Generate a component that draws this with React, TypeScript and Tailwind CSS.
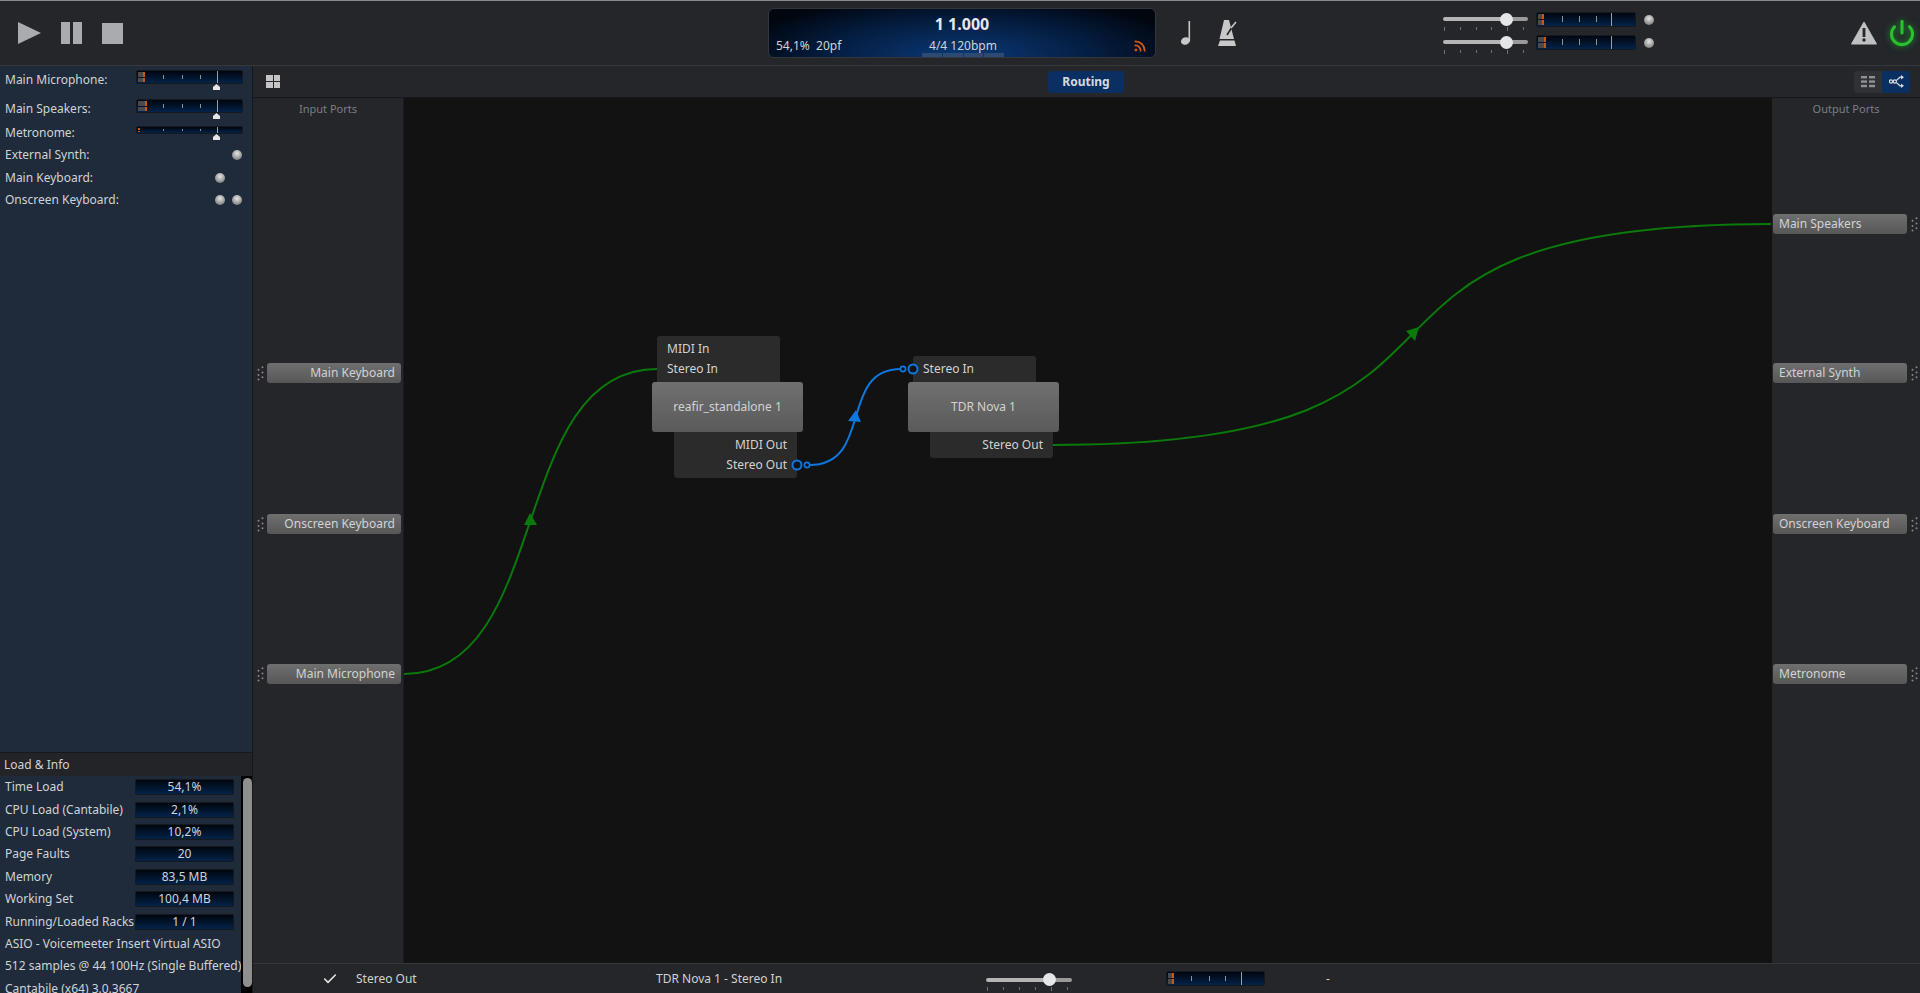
import { Check, Power, Rss } from "lucide-react";

const FONT = "font-['Noto_Sans','Open_Sans',sans-serif]";

function Meter({ level, className }: { level: number; className: string }) {
  return (
    <div className={`relative shrink-0 rounded-[2px] border border-[#15181d] bg-gradient-to-b from-[#01060f] to-[#03234a] ${className}`}>
      {/* level block */}
      <div className="absolute left-[1px] top-[1px] bottom-[1px] flex flex-col gap-px" style={{ width: level }}>
        <div className="flex-1 border-r-2 border-[#c9590f] bg-[#4a4a4a]" />
        <div className="flex-1 border-r-2 border-[#c9590f] bg-[#4a4a4a]" />
      </div>
      <div className="absolute left-[25%] top-[30%] bottom-[30%] w-px bg-[#8c9299]" />
      <div className="absolute left-[43%] top-[30%] bottom-[30%] w-px bg-[#8c9299]" />
      <div className="absolute left-[60%] top-[30%] bottom-[30%] w-px bg-[#8c9299]" />
      <div className="absolute left-[76%] top-0 bottom-0 w-px bg-[#9aa0a6]" />
    </div>
  );
}

function MixerMeter({ level, thin }: { level: number; thin?: boolean }) {
  return (
    <div className="flex w-[107px] flex-col">
      <Meter level={level} className={thin ? "h-[8px] w-[107px]" : "h-[14px] w-[107px]"} />
      <div className="ml-[76px] flex h-[6px] w-[9px] items-end">
        <svg width="9" height="6" viewBox="0 0 9 6">
          <path d="M4.5 0 L8 3 V6 H1 V3 Z" fill="#e6e6e6" />
        </svg>
      </div>
    </div>
  );
}

function Led() {
  return <div className="h-[10px] w-[10px] shrink-0 rounded-full bg-[radial-gradient(circle_at_50%_35%,#e4e4e4,#8a8a8a_70%,#6c6c6c)]" />;
}

function Slider({ className }: { className: string }) {
  return (
    <div className={`shrink-0 ${className}`}>
      <div className="flex h-[13px] items-center">
        <div className="h-[4px] w-[58px] rounded-l-full bg-[#b5b5b5]" />
        <div className="z-10 -mx-[1px] h-[13px] w-[13px] shrink-0 rounded-full bg-[#e4e6ea]" />
        <div className="h-[4px] flex-1 rounded-r-full bg-[#9a9a9a]" />
      </div>
      <div className="flex justify-between pl-[1px] pr-[4px] pt-[1px]">
        <div className="h-[4px] w-px bg-[#6f7175]" />
        <div className="h-[3px] w-px bg-[#6f7175]" />
        <div className="h-[3px] w-px bg-[#6f7175]" />
        <div className="h-[3px] w-px bg-[#6f7175]" />
        <div className="h-[4px] w-px bg-[#6f7175]" />
        <div className="h-[3px] w-px bg-[#6f7175]" />
      </div>
    </div>
  );
}

function Grip() {
  return (
    <svg width="7" height="15" viewBox="0 0 7 15" className="shrink-0">
      <g fill="#85878a">
        <circle cx="5.5" cy="1.2" r="1" />
        <circle cx="1.5" cy="3.8" r="1" />
        <circle cx="5.5" cy="6.4" r="1" />
        <circle cx="1.5" cy="9" r="1" />
        <circle cx="5.5" cy="11.2" r="1" />
        <circle cx="1.5" cy="13.6" r="1" />
      </g>
    </svg>
  );
}

function InputPort({ label, className }: { label: string; className: string }) {
  return (
    <div className={`flex h-[20px] items-center ${className}`}>
      <div className="ml-[4px] w-[10px]">
        <Grip />
      </div>
      <div className="flex h-[20px] w-[134px] items-center justify-end rounded-[3px] bg-gradient-to-b from-[#6f6f6f] to-[#575757] pr-[6px] text-[12px] text-[#d2d2d2]">
        {label}
      </div>
    </div>
  );
}

function OutputPort({ label, className }: { label: string; className: string }) {
  return (
    <div className={`flex h-[20px] items-center ${className}`}>
      <div className="ml-[1px] flex h-[20px] w-[134px] items-center rounded-[3px] bg-gradient-to-b from-[#6f6f6f] to-[#575757] pl-[6px] text-[12px] text-[#d2d2d2]">
        {label}
      </div>
      <div className="ml-[4px]">
        <Grip />
      </div>
    </div>
  );
}

const MIXER_LEDS = [
  { label: "External Synth:", a: false, b: true, cls: "h-[22px]" },
  { label: "Main Keyboard:", a: true, b: false, cls: "h-[23px]" },
  { label: "Onscreen Keyboard:", a: true, b: true, cls: "h-[22px]" },
];

const INFO = [
  ["Time Load", "54,1%"],
  ["CPU Load (Cantabile)", "2,1%"],
  ["CPU Load (System)", "10,2%"],
  ["Page Faults", "20"],
  ["Memory", "83,5 MB"],
  ["Working Set", "100,4 MB"],
  ["Running/Loaded Racks", "1 / 1"],
];

function TopBar() {
  return (
    <div className="flex h-[65px] shrink-0 items-center border-b border-[#36383c] bg-[#24262a]">
      {/* transport buttons */}
      <svg width="24" height="24" viewBox="0 0 24 24" className="ml-[18px]">
        <path d="M0 1 L23 12 L0 23 Z" fill="#a9abae" />
      </svg>
      <div className="ml-[19px] flex w-[21px] justify-between">
        <div className="h-[22px] w-[9px] bg-[#a9abae]" />
        <div className="h-[22px] w-[9px] bg-[#a9abae]" />
      </div>
      <div className="ml-[20px] h-[21px] w-[21px] bg-[#a9abae]" />

      {/* position display */}
      <div className="ml-[645px] flex h-[50px] w-[388px] flex-col items-center rounded-[6px] border border-[#33363b] bg-[radial-gradient(ellipse_60%_130%_at_50%_100%,#0a3a78,#041c3e_60%,#01060f)] relative">
        <div className="mt-[3px] text-[16px] leading-[24px] font-bold text-[#e6e8ea]">1 1.000</div>
        <div className="mt-[1px] flex w-full items-center px-[7px] text-[12px] leading-[18px] text-[#cfd3d6]">
          <div className="w-[138px]">54,1%&nbsp;&nbsp;20pf</div>
          <div className="w-[98px] text-center">4/4 120bpm</div>
          <div className="flex flex-1 justify-end pr-[1px]">
            <Rss className="h-[14px] w-[14px] text-[#d9590f]" strokeWidth={3} />
          </div>
        </div>
        <div className="absolute bottom-0 left-[153px] flex h-[4px] w-[82px] gap-px">
          <div className="flex-1 bg-[#2d4a72]" />
          <div className="flex-1 bg-[#2d4a72]" />
          <div className="flex-1 bg-[#2d4a72]" />
          <div className="flex-1 bg-[#2d4a72]" />
        </div>
      </div>

      {/* note + metronome */}
      <svg width="14" height="24" viewBox="0 0 14 24" className="ml-[24px]" fill="#c8c8c8">
        <rect x="8.5" y="0" width="1.6" height="20" />
        <ellipse cx="5.5" cy="20" rx="4.6" ry="3.6" transform="rotate(-20 5.5 20)" />
      </svg>
      <svg width="20" height="27" viewBox="0 0 20 27" className="ml-[24px]" fill="#c8c8c8">
        <path d="M6 0 H11 L16 19 H1.5 Z M2 20.5 H16.5 L18 26 H0 Z" />
        <path d="M9 15 L16 4" stroke="#24262a" strokeWidth="1.6" />
        <path d="M13 8 L18 2" stroke="#c8c8c8" strokeWidth="1.6" />
      </svg>

      {/* master levels */}
      <div className="ml-[205px] flex w-[212px] flex-col gap-[5px]">
        <div className="flex items-start">
          <Slider className="w-[85px]" />
          <Meter level={6} className="ml-[8px] mt-[-1px] h-[15px] w-[100px]" />
          <div className="ml-[8px] mt-[2px]">
            <Led />
          </div>
        </div>
        <div className="flex items-start">
          <Slider className="w-[85px]" />
          <Meter level={8} className="ml-[8px] mt-[-1px] h-[15px] w-[100px]" />
          <div className="ml-[8px] mt-[2px]">
            <Led />
          </div>
        </div>
      </div>

      {/* warning + power */}
      <svg width="26" height="24" viewBox="0 0 26 24" className="ml-[196px]">
        <path d="M13 1 L25.5 23 H0.5 Z" fill="#bfc0c2" stroke="#bfc0c2" strokeLinejoin="round" />
        <rect x="11.6" y="7" width="2.8" height="9" fill="#24262a" />
        <circle cx="13" cy="19" r="1.7" fill="#24262a" />
      </svg>
      <Power className="ml-[11px] h-[28px] w-[28px] text-[#27c22e] drop-shadow-[0_0_3px_#1a9c22]" strokeWidth={2.6} />
    </div>
  );
}

function LeftPanel() {
  return (
    <div className="flex w-[253px] shrink-0 flex-col border-r border-[#15171a] bg-[#1f2b3a] text-[12px] text-[#cfd3d6]">
      <div className="flex flex-col px-[5px] pr-[9px] pt-[3px]">
        <div className="flex h-[22px] items-center justify-between">
          <span>Main Microphone:</span>
          <MixerMeter level={7} />
        </div>
        <div className="mt-[7px] flex h-[22px] items-center justify-between">
          <span>Main Speakers:</span>
          <MixerMeter level={9} />
        </div>
        <div className="mt-[2px] flex h-[22px] items-center justify-between">
          <span>Metronome:</span>
          <MixerMeter level={2} thin />
        </div>
        {MIXER_LEDS.map((r) => (
          <div key={r.label} className={`flex items-center justify-between pr-[1px] ${r.cls}`}>
            <span>{r.label}</span>
            <div className="flex gap-[7px]">
              <div className="h-[10px] w-[10px]">{r.a && <Led />}</div>
              <div className="h-[10px] w-[10px]">{r.b && <Led />}</div>
            </div>
          </div>
        ))}
      </div>

      <div className="mt-auto flex h-[241px] flex-col overflow-hidden">
        <div className="flex h-[24px] shrink-0 items-center border-t border-[#15181d] bg-[#232427] pl-[4px]">Load &amp; Info</div>
        <div className="flex flex-1 overflow-hidden">
          <div className="flex-1 pl-[5px]">
            {INFO.map(([k, v]) => (
              <div key={k} className="flex h-[22.4px] items-center">
                <span className="w-[130px] shrink-0 whitespace-nowrap">{k}</span>
                <div className="flex h-[16px] w-[99px] items-center justify-center rounded-[1px] border border-[#15181d] bg-gradient-to-b from-[#01060f] to-[#03234a]">
                  {v}
                </div>
              </div>
            ))}
            <div className="flex h-[22.4px] items-center whitespace-nowrap">ASIO - Voicemeeter Insert Virtual ASIO</div>
            <div className="flex h-[22.4px] items-center whitespace-nowrap">512 samples @ 44 100Hz (Single Buffered)</div>
            <div className="flex h-[22.4px] items-center whitespace-nowrap">Cantabile (x64) 3.0.3667</div>
          </div>
          <div className="w-[13px] shrink-0 bg-black pl-[2px] pt-[2px]">
            <div className="h-[209px] w-[9px] rounded-full bg-[#8f8f8f]" />
          </div>
        </div>
      </div>
    </div>
  );
}

function RoutingNode({
  inputs,
  outputs,
  name,
  className,
}: {
  inputs: string[];
  outputs: string[];
  name: string;
  className: string;
}) {
  return (
    <div className={`absolute flex w-[151px] flex-col text-[12px] leading-[20px] text-[#d2d2d2] ${className}`}>
      <div className="ml-[5px] w-[123px] rounded-t-[3px] bg-[#2b2b2b] pb-[3px] pl-[10px] pt-[3px]">
        {inputs.map((p) => (
          <div key={p}>{p}</div>
        ))}
      </div>
      <div className="flex h-[50px] items-center justify-center rounded-[3px] bg-gradient-to-b from-[#707070] to-[#5a5a5a]">{name}</div>
      <div className="ml-[22px] w-[123px] rounded-b-[3px] bg-[#2b2b2b] pb-[3px] pr-[10px] pt-[3px] text-right">
        {outputs.map((p) => (
          <div key={p}>{p}</div>
        ))}
      </div>
    </div>
  );
}

function Canvas() {
  return (
    <div className="relative flex-1 overflow-hidden bg-[#121212]">
      <RoutingNode className="left-[248px] top-[238px]" inputs={["MIDI In", "Stereo In"]} outputs={["MIDI Out", "Stereo Out"]} name="reafir_standalone 1" />
      <RoutingNode className="left-[504px] top-[258px]" inputs={["Stereo In"]} outputs={["Stereo Out"]} name="TDR Nova 1" />
      {/* wires, in page coordinates */}
      <svg className="absolute left-0 top-0" width="1367" height="865" viewBox="405 98 1367 865" fill="none">
        <path d="M405 674 C554 674 508 369 658 369" stroke="#0a7a0a" strokeWidth="2" />
        <polygon points="531,513 525,525 538,525" fill="#0a7a0a" />
        <path d="M1054 445 C1554 445 1272 224 1772 224" stroke="#0a7a0a" strokeWidth="2" />
        <polygon points="1420,327 1407,331 1416,341" fill="#0a7a0a" />
        <path d="M810 465 C875 465 839 369 902 369" stroke="#0c78e0" strokeWidth="2" />
        <polygon points="857,410 849,421 862,422" fill="#0c78e0" />
        <circle cx="798" cy="465" r="4.5" stroke="#0c78e0" strokeWidth="2" fill="#121212" />
        <circle cx="808" cy="465" r="2.6" stroke="#0c78e0" strokeWidth="1.6" fill="#121212" />
        <circle cx="904" cy="369" r="2.6" stroke="#0c78e0" strokeWidth="1.6" fill="#121212" />
        <circle cx="914" cy="369" r="4.5" stroke="#0c78e0" strokeWidth="2" fill="#121212" />
      </svg>
    </div>
  );
}

function Workspace() {
  return (
    <div className="flex min-w-0 flex-1 flex-col">
      {/* view switch row */}
      <div className="flex h-[32px] shrink-0 items-center border-b border-[#15171a] bg-[#24262a]">
        <div className="ml-[13px] grid h-[13px] w-[14px] grid-cols-2 gap-px">
          <div className="bg-[#c4c4c4]" />
          <div className="bg-[#c4c4c4]" />
          <div className="bg-[#c4c4c4]" />
          <div className="bg-[#c4c4c4]" />
        </div>
        <div className="ml-[768px] flex h-[22px] w-[76px] items-center justify-center rounded-[4px] bg-[#0a2f63] text-[12px] font-bold text-[#d6dbe0]">
          Routing
        </div>
        <div className="ml-[730px] flex h-[22px] w-[56px] overflow-hidden rounded-[4px]">
          <div className="flex w-[28px] items-center justify-center bg-[#2f3134]">
            <svg width="14" height="12" viewBox="0 0 14 12" fill="#8f9195">
              <rect x="0" y="0" width="6" height="2.4" />
              <rect x="8" y="0" width="6" height="2.4" />
              <rect x="0" y="4.4" width="6" height="2.4" />
              <rect x="8" y="4.4" width="6" height="2.4" />
              <rect x="0" y="8.8" width="6" height="2.4" />
              <rect x="8" y="8.8" width="6" height="2.4" />
            </svg>
          </div>
          <div className="flex w-[28px] items-center justify-center bg-[#0a2f63]">
            <svg width="15" height="13" viewBox="0 0 15 13" fill="none" stroke="#d6dbe0" strokeWidth="1.2">
              <circle cx="2" cy="6.5" r="1.6" />
              <circle cx="5.8" cy="6.5" r="1.6" />
              <path d="M7.2 5.6 L11 2.2 H12.5 M7.2 7.4 L11 10.8 H12.5" />
              <path d="M12 0 L15 2.2 L12 4.4 Z M12 8.6 L15 10.8 L12 13 Z" fill="#d6dbe0" stroke="none" />
            </svg>
          </div>
        </div>
      </div>

      {/* routing */}
      <div className="flex min-h-0 flex-1">
        <div className="flex w-[151px] shrink-0 flex-col border-r border-[#1b1c1f] bg-[#24262a]">
          <div className="pt-[3px] text-center text-[11px] leading-[16px] text-[#7c7f83]">Input Ports</div>
          <InputPort label="Main Keyboard" className="mt-[246px]" />
          <InputPort label="Onscreen Keyboard" className="mt-[131px]" />
          <InputPort label="Main Microphone" className="mt-[130px]" />
        </div>
        <Canvas />
        <div className="flex w-[148px] shrink-0 flex-col bg-[#24262a]">
          <div className="pt-[3px] text-center text-[11px] leading-[16px] text-[#7c7f83]">Output Ports</div>
          <OutputPort label="Main Speakers" className="mt-[97px]" />
          <OutputPort label="External Synth" className="mt-[129px]" />
          <OutputPort label="Onscreen Keyboard" className="mt-[131px]" />
          <OutputPort label="Metronome" className="mt-[130px]" />
        </div>
      </div>

      {/* selected connection */}
      <div className="flex h-[30px] shrink-0 items-center border-t border-[#36383c] bg-[#24262a] text-[12px] text-[#d2d2d2]">
        <Check className="ml-[69px] h-[16px] w-[16px] text-[#e4e4e4]" strokeWidth={2.4} />
        <span className="ml-[18px] w-[300px]">Stereo Out</span>
        <span className="w-[330px]">TDR Nova 1 - Stereo In</span>
        <Slider className="mt-[7px] w-[86px]" />
        <Meter level={6} className="ml-[94px] h-[15px] w-[99px]" />
        <span className="ml-[61px]">-</span>
      </div>
    </div>
  );
}

export default function App() {
  return (
    <div className={`flex h-[993px] w-[1920px] flex-col overflow-hidden border-t border-[#8a8a8a] bg-[#24262a] ${FONT}`}>
      <TopBar />
      <div className="flex min-h-0 flex-1">
        <LeftPanel />
        <Workspace />
      </div>
    </div>
  );
}
